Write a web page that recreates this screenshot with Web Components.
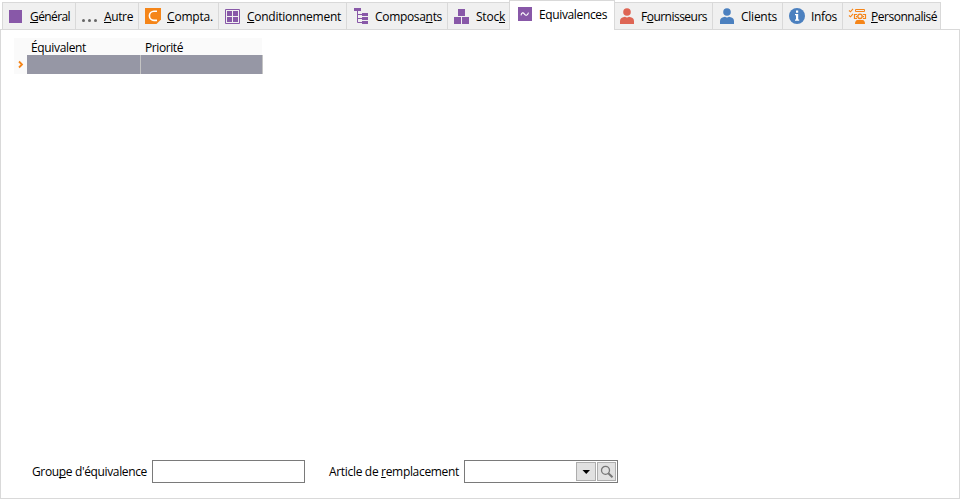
<!DOCTYPE html>
<html lang="fr"><head><meta charset="utf-8"><title>Article</title>
<style>html,body{margin:0;height:100%;background:#fff;overflow:hidden}body{font:12px/16px "Open Sans","Noto Sans",sans-serif;color:#000}</style></head>
<body><article-window></article-window>
<script>
// Text fitted to a given advance width, with an underlined access key marked by "_".
class FitText extends HTMLElement{
  connectedCallback(){
    const t=this.getAttribute('text'),i=t.indexOf('_');
    const html=i<0?t:t.slice(0,i)+'<u>'+t[i+1]+'</u>'+t.slice(i+2);
    this.attachShadow({mode:'open'}).innerHTML=`<style>:host{display:block;white-space:nowrap;line-height:16px}span{display:inline-block}u{text-underline-offset:1px;text-decoration-thickness:1px;text-decoration-skip-ink:none}</style><span>${html}</span>`;
    const s=this.shadowRoot.querySelector('span'),n=t.replace('_','').length;
    s.style.letterSpacing=((+this.getAttribute('width')-s.getBoundingClientRect().width)/n)+'px';
  }
}
customElements.define('fit-text',FitText);

const P='#8858a8',O='#f58518',B='#4b80bf';
const person=(x,c)=>`<g fill="${c}"><circle cx="${x+7}" cy="12" r="3.8"/><path d="M${x} 24v-3q.2-3.300 3.200-3.800l1.800-.4q2 1.200 4 0l1.800.4q3 .5 3.200 3.800v3z"/></g>`;
const ICONS={
 general:`<path fill="${P}" d="M9 10h13v13H9z"/>`,
 other:`<g fill="#666"><circle cx="83.500" cy="20.500" r="1.500"/><circle cx="89.500" cy="20.500" r="1.500"/><circle cx="95.500" cy="20.500" r="1.500"/></g>`,
 compta:`<path fill="${O}" d="M145 8h16v11.500L156.500 24H145z"/><path fill="none" stroke="#fff" stroke-width="1.600" d="M157 11.200h-3a4.600 4.600 0 0 0 0 9.200h3"/>`,
 pack:`<path fill="none" stroke="${P}" d="M225.500 9.500h14v14h-14z"/><path fill="${P}" d="M227 11h5v5h-5zM233 11h5v5h-5zM227 17h5v5h-5zM233 17h5v5h-5z"/>`,
 tree:`<path fill="${P}" d="M354 8h7v3h-7zM362 13h6v3h-6zM362 17h6v3h-6zM362 21h6v3h-6z"/><path fill="none" stroke="${P}" d="M357.500 11v11.500h5M357.500 14.500h5M357.500 18.500h5"/>`,
 stock:`<path fill="${P}" d="M458 9h7v7h-7zM454 17h7v7h-7zM462 17h7v7h-7z"/>`,
 equiv:`<path fill="${P}" d="M518 7h14v14h-14z"/><path fill="none" stroke="#fff" stroke-width="1.100" d="M521 15.300c.5-3 2.200-3 3.500-1.200s3 1.500 4-1.500"/>`,
 supplier:person(620,'#de6554'),client:person(720,B),
 info:`<circle cx="797" cy="16" r="8" fill="${B}"/><path fill="#fff" d="M796 10.500h2.200v2.200H796zM795 14h3.200v5.500h1v1.200h-4.200v-1.200h1v-4.300h-1z"/>`,
 custom:`<g fill="none" stroke="${O}"><path d="M849 10.500l1.500 1.300 2.500-3M849 15.500l1.500 1.300 2.500-3" stroke-width="1.100"/><path d="M855.500 9.500h9v2h-9z"/><path d="M857 14.500h-2.500v4h2.500M863 14.500h2.500v4h-2.500" stroke-width="1.200"/><circle cx="860" cy="16.300" r="2.200" stroke-width="1.300"/></g><path fill="${O}" d="M856 16h1.200v1.200H856zM862.800 16h1.200v1.200h-1.200zM857.500 20h5q2.500.3 2.500 4h-10q0-3.700 2.500-4z"/>`
};
class PageTab extends HTMLElement{
  connectedCallback(){
    const a=k=>this.getAttribute(k),x=+a('x'),w=+a('width');
    this.attachShadow({mode:'open'}).innerHTML=`<style>
    :host{display:flex;box-sizing:border-box;width:${w}px;height:27px;margin-top:2px;background:#f0f0f0;border-top:1px solid #d9d9d9;border-left:1px solid #d9d9d9}
    :host([active]){height:30px;margin-top:0;background:#fff;border-right:1px solid #d9d9d9}
    svg{flex:none;width:27px;height:26px}fit-text{margin:6px 0 0 1px}:host([icon=general]) fit-text{margin-left:0}:host([icon=supplier]) fit-text{margin-left:-1px}:host([active]) fit-text{margin-left:2px}:host([last]){border-right:1px solid #d9d9d9}
    </style><svg viewBox="${x+1} ${this.hasAttribute('active')?1:3} 27 26">${ICONS[a('icon')]}</svg><fit-text text="${a('text')}" width="${a('tw')}"></fit-text>`;
  }
}
customElements.define('page-tab',PageTab);

class TabStrip extends HTMLElement{
  connectedCallback(){
    this.attachShadow({mode:'open'}).innerHTML=`<style>:host{display:flex;height:30px;padding-left:2px;box-sizing:border-box;background:linear-gradient(#d9d9d9,#d9d9d9) 0 29px/100% 1px no-repeat}</style><slot></slot>`;
  }
}
customElements.define('tab-strip',TabStrip);

class DataGrid extends HTMLElement{
  connectedCallback(){
    this.attachShadow({mode:'open'}).innerHTML=`<style>
    :host{display:grid;grid-template-columns:13px 114px 122px;grid-template-rows:17px 19px;width:249px}
    .h,.m{background:#fafafa}.h{padding-left:4px}.h fit-text{margin-top:2px}.c{background:#9697a5;border-right:1px solid #c4c4c4}
    svg{display:block}.h,.m,.c{overflow:hidden}</style>
    <div class="m"></div><div class="h"><fit-text text="Équivalent" width="55"></fit-text></div><div class="h" style="margin-right:1px"><fit-text text="Priorité" width="38"></fit-text></div>
    <div class="m"><svg width="13" height="19"><path d="M5 6.500l3 3-3 3" fill="none" stroke="${O}" stroke-width="1.800"/></svg></div><div class="c"></div><div class="c"></div>`;
  }
}
customElements.define('data-grid',DataGrid);

class FormField extends HTMLElement{
  connectedCallback(){
    const a=k=>this.getAttribute(k);
    this.attachShadow({mode:'open'}).innerHTML=`<style>
    :host{display:flex;align-items:center;gap:5px}
    .box{box-sizing:border-box;display:flex;justify-content:flex-end;gap:1px;padding:1px;border:1px solid #7a7a7a;height:23px;background:#fff}
    .b{box-sizing:border-box;width:20px;height:19px;border:1px solid #adadad;background:#e1e1e1}svg{display:block}
    fit-text{width:${a('tw')}px}</style>
    <fit-text text="${a('text')}" width="${a('tw')}"></fit-text><div class="box" style="width:${a('box')}px">${this.hasAttribute('lookup')?`
    <div class="b"><svg width="18" height="17"><path d="M5.500 7h7.500l-3.750 4z"/></svg></div>
    <div class="b" style="width:19px"><svg width="17" height="17"><circle cx="7.500" cy="7.300" r="4" fill="none" stroke="#777" stroke-width="1.300"/><path d="M10.300 10.200l4.200 4" stroke="#777" stroke-width="2"/></svg></div>`:''}</div>`;
  }
}
customElements.define('form-field',FormField);

class ArticleWindow extends HTMLElement{
  connectedCallback(){
    const tabs=[['general',2,'_Général',40],['other',75,'_Autre',29],['compta',138,'_Compta.',46],['pack',218,'_Conditionnement',94],['tree',346,'Composa_nts',67],['stock',447,'Stoc_k',29],['equiv',509,'Equivalences',68],['supplier',614,'F_ournisseurs',66],['client',712,'Clients',36],['info',782,'Infos',26],['custom',842,'_Personnalisé',66]];
    this.attachShadow({mode:'open'}).innerHTML=`<style>
    :host{display:flex;flex-direction:column;width:960px;height:499px}
    main{flex:1;box-sizing:border-box;display:flex;flex-direction:column;justify-content:space-between;border:1px solid #d9d9d9;border-top:0;padding:8px 14px 15px 13px}
    footer{display:flex;gap:24px;padding-left:18px}</style>
    <tab-strip>${tabs.map(([icon,x,t,tw],i)=>{const act=icon==='equiv',last=i===10,end=last?941:tabs[i+1][1]+(act?1:0);
      const w=end-(icon==='supplier'?615:x);
      return `<page-tab icon="${icon}" x="${x}" width="${w}" text="${t}" tw="${tw}"${act?' active':''}${last?' last':''}${icon==='supplier'?' style="border-left:0"':''}></page-tab>`}).join('')}</tab-strip>
    <main><data-grid></data-grid><footer><form-field text="Grou_pe d'équivalence" tw="115" box="153"></form-field><form-field text="Article de _remplacement" tw="130" box="154" lookup></form-field></footer></main>`;
  }
}
customElements.define('article-window',ArticleWindow);
</script></body></html>
